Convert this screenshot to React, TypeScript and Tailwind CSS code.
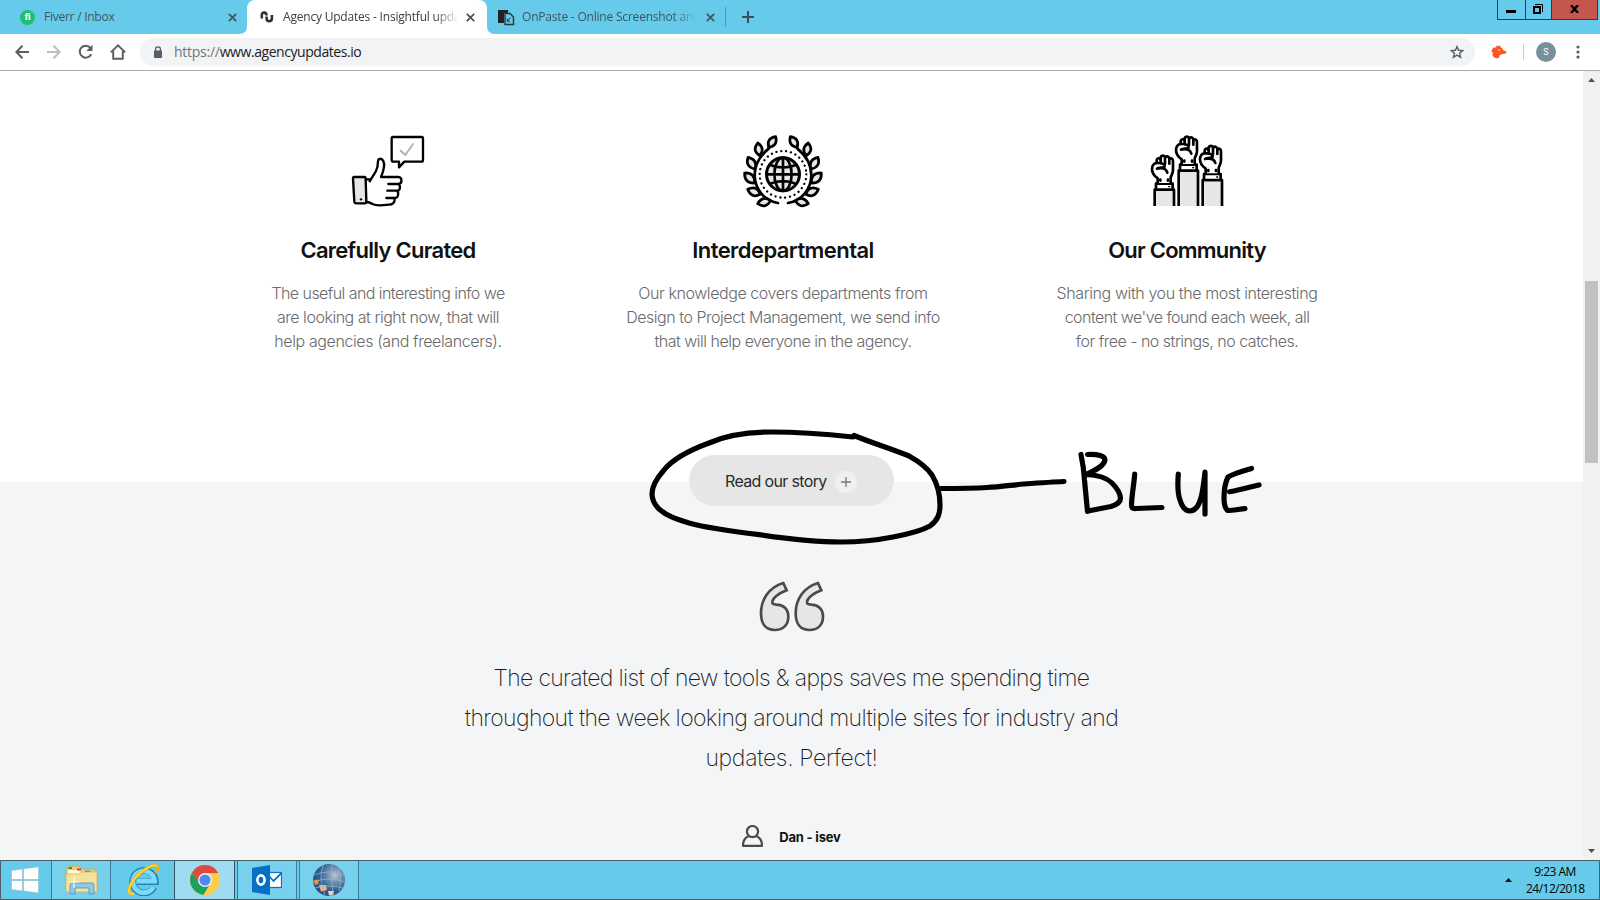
import React from "react";

const INK = "#000";
const FILL = "#e6e6e6";

function Leaf({ a, b }: { a: [number, number]; b: [number, number] }) {
  const mx = (a[0] + b[0]) / 2;
  const my = (a[1] + b[1]) / 2;
  const nx = -(b[1] - a[1]) * 0.55;
  const ny = (b[0] - a[0]) * 0.55;
  return (
    <path
      d={`M${a[0]} ${a[1]} Q${mx + nx} ${my + ny} ${b[0]} ${b[1]} Q${mx - nx} ${my - ny} ${a[0]} ${a[1]}Z`}
      fill={FILL}
    />
  );
}

function Branch() {
  return (
    <g stroke={INK} strokeWidth="8.2" strokeLinejoin="round" strokeLinecap="round" fill="none">
      <path d="M174 249 C132 242 104 206 104 166 C104 132 121 106 146 86" />
      <Leaf a={[146, 82]} b={[167, 50]} />
      <Leaf a={[119, 107]} b={[113, 69]} />
      <Leaf a={[105, 147]} b={[84, 112]} />
      <Leaf a={[104, 189]} b={[74, 159]} />
      <Leaf a={[121, 223]} b={[83, 208]} />
      <Leaf a={[152, 242]} b={[113, 251]} />
    </g>
  );
}

function WreathIcon() {
  return (
    <svg width="120" height="100" viewBox="9 0 360 300">
      <Branch />
      <g transform="translate(378 0) scale(-1 1)">
        <Branch />
      </g>
      <circle cx="189" cy="163" r="70" fill="none" stroke={INK} strokeWidth="7" strokeLinecap="round" strokeDasharray="0.1 14.56" />
      <g fill="none" stroke={INK} strokeWidth="8">
        <circle cx="189" cy="163" r="49.5" fill={FILL} strokeWidth="9" />
        <ellipse cx="189" cy="163" rx="26" ry="50" />
        <path d="M189 113V213M139 163H239M150 135Q189 150 228 135M150 191Q189 176 228 191" />
      </g>
    </svg>
  );
}

function ThumbIcon() {
  return (
    <svg width="120" height="100" viewBox="-6 0 360 300">
      <g fill="none" stroke={INK} strokeWidth="7" strokeLinejoin="round" strokeLinecap="round">
        <path d="M72 171H103Q107 171 107 176L109 244Q109 250 104 250H79Q74 250 73 245L69 176Q69 171 72 171Z" fill={FILL} />
        <path d="M108 178L120 178" />
        <path d="M119 184L137 155C144 143 144 134 144 124C144 115 155 113 160 123C165 133 164 145 153 171H205C218 171 217 192 205 192H175" />
        <path d="M206 192C213 199 210 212 202 212H172M202 213C208 221 203 234 196 234H169M194 235C195 248 188 254 176 254C158 256 142 259 127 252Q119 246 109 246" />
        <path d="M189 51H275Q279 51 279 56V119Q279 125 274 125H223L207 142V125H190Q185 125 185 120V56Q185 51 189 51Z" />
        <path d="M212 92L226 105L249 72" stroke="#b3b3b3" strokeWidth="6" />
      </g>
      <circle cx="93" cy="238" r="3.5" />
    </svg>
  );
}

function Arm({ x, y }: { x: number; y: number }) {
  return (
    <g transform={`translate(${x} ${y})`} fill="none" stroke={INK} strokeWidth="8" strokeLinejoin="round" strokeLinecap="round">
      <path d={`M146 ${262 - y}V152H204V${262 - y}`} fill={FILL} strokeLinecap="butt" />
      <rect x="150" y="134" width="50" height="18" fill="#fff" />
      <path d="M155 132V118C145 111 138 101 138 90C138 80 141 74 152 71V64C153 56 163 56 164 62V55C166 48 176 48 178 55C181 50 189 51 190 59C197 56 201 60 201 67V92C201 104 196 108 194 116V132" fill="#fff" />
      <path d="M164 57V73M177 55V75M190 59V74M152 72H163Q178 76 176 83C171 87 160 84 153 89M159 88Q180 86 184 101M163 125V122M186 125V122" />
      <path d="M188 143H191" strokeWidth="4" />
    </g>
  );
}

function FistsIcon() {
  return (
    <svg width="120" height="100" viewBox="-9 0 360 300">
      <defs>
        <clipPath id="arms">
          <rect x="0" y="0" width="360" height="258" />
        </clipPath>
      </defs>
      <g clipPath="url(#arms)">
        <Arm x={0} y={0} />
        <Arm x={-72} y={57} />
        <Arm x={72} y={28} />
      </g>
    </svg>
  );
}

function CloseX({ color }: { color: string }) {
  return (
    <svg width="9" height="9" viewBox="0 0 9 9" stroke={color} strokeWidth="1.7">
      <path d="M0.8 0.8L8.2 8.2M8.2 0.8L0.8 8.2" />
    </svg>
  );
}

function TabStrip() {
  return (
    <div className="flex h-[34px] shrink-0 bg-[#66caea] text-[12px] leading-[34px] tracking-[-0.2px] text-[#3f5660]">
      <div className="flex w-[247px] items-center pl-[20px]">
        <span className="flex size-[15px] items-center justify-center rounded-full bg-[#1dbf73] font-['Roboto'] text-[9px] font-black leading-none tracking-tight text-white">fi</span>
        <span className="ml-[9px] flex-1 tracking-[-0.25px]">Fiverr / Inbox</span>
        <span className="mr-[10px]"><CloseX color="#3f5660" /></span>
      </div>
      <div className="relative flex w-[240px] items-center rounded-t-[8px] bg-white pl-[13px] text-[#3c4043]">
        <svg className="absolute -left-[8px] bottom-0" width="8" height="8"><path d="M8 0V8H0Q8 8 8 0Z" fill="#fff" /></svg>
        <svg className="absolute -right-[8px] bottom-0" width="8" height="8"><path d="M0 0V8H8Q0 8 0 0Z" fill="#fff" /></svg>
        <svg width="14" height="14" viewBox="0 0 14 14" fill="none" stroke="#333" strokeWidth="2.6">
          <path d="M1.8 8.6V5Q1.8 2.6 4.1 2.6Q6.6 2.6 6.6 5.4M6.6 6.4V8.6Q6.6 11.2 9.1 11.2Q11.9 11.2 11.9 8.6V5" />
        </svg>
        <span className="ml-[9px] w-[176px] whitespace-nowrap [mask-image:linear-gradient(90deg,#000_152px,transparent)]">Agency Updates - Insightful upda</span>
        <span className="ml-[7px]"><CloseX color="#4a4d50" /></span>
      </div>
      <div className="flex w-[238px] items-center pl-[11px]">
        <svg width="17" height="17" viewBox="0 0 17 17">
          <path d="M0 1H10V4H6V14H0Z" fill="#222" />
          <path d="M7 4.5H12L15.5 8V15.5H7Z" fill="#66caea" stroke="#333" strokeWidth="1.4" />
          <path d="M12.5 8.5L9.5 12M9.3 9.5V12.3H12" fill="none" stroke="#333" />
        </svg>
        <span className="ml-[7px] w-[175px] whitespace-nowrap [mask-image:linear-gradient(90deg,#000_152px,transparent)]">OnPaste - Online Screenshot and</span>
        <span className="ml-[9px]"><CloseX color="#3f5660" /></span>
      </div>
      <div className="mt-[7px] h-[20px] w-px bg-[#4c98b0]" />
      <svg className="ml-[16px] mt-[11px]" width="12" height="12" stroke="#3f4d54" strokeWidth="2"><path d="M6 0V12M0 6H12" /></svg>
      <div className="ml-auto mr-[2px] flex h-[20px] border border-t-0 border-[#26404b]">
        <div className="flex w-[28px] justify-center border-r border-[#26404b] pr-px pt-[10px]"><div className="h-[3px] w-[10px] bg-black" /></div>
        <div className="flex w-[26px] justify-center border-r border-[#26404b] pr-px pt-[4px]">
          <svg width="10" height="10" fill="none" stroke="#000"><path d="M2 0.5H9.5V8" /><rect x="1" y="3" width="6" height="6" strokeWidth="2" /></svg>
        </div>
        <div className="flex w-[45px] justify-center bg-[#c4564e] pt-[5px]">
          <svg width="9" height="8" stroke="#000" strokeWidth="2.4"><path d="M1 0L8 8M8 0L1 8" /></svg>
        </div>
      </div>
    </div>
  );
}

function Toolbar() {
  return (
    <div className="flex h-[37px] shrink-0 items-center border-b border-[#a9abad] bg-white pb-px">
      <svg className="ml-[15px]" width="14" height="14" fill="none" stroke="#5a5d61" strokeWidth="2"><path d="M14 7H1.5M7.5 0.8L1.3 7L7.5 13.2" /></svg>
      <svg className="ml-[18px]" width="14" height="14" fill="none" stroke="#babcbe" strokeWidth="2"><path d="M0 7H12.5M6.5 0.8L12.7 7L6.5 13.2" /></svg>
      <svg className="ml-[17px]" width="16" height="16" fill="none" stroke="#5a5d61" strokeWidth="2"><path d="M13.2 10.2A6 6 0 1 1 12.4 3.8" /><path d="M14.5 0.8V7H8.3Z" fill="#5a5d61" stroke="none" /></svg>
      <svg className="ml-[16px]" width="16" height="16" fill="none" stroke="#5a5d61" strokeWidth="1.9"><path d="M0.8 8.4L8 1.4L15.2 8.4M3.2 7V14.8H12.8V7" /></svg>
      <div className="ml-[14px] flex h-[28px] w-[1335px] items-center rounded-full bg-[#f1f3f4] pl-[14px] pr-[11px]">
        <svg width="8" height="12" viewBox="0 0 8 12"><path d="M0 4.5H8V11Q8 12 7 12H1Q0 12 0 11Z" fill="#5a5d61" /><path d="M1.6 5V3Q1.6 0.8 4 0.8T6.4 3V5" fill="none" stroke="#5a5d61" strokeWidth="1.3" /></svg>
        <span className="ml-[12px] text-[14px] leading-[28px] tracking-[-0.44px] text-[#202124]"><span className="tracking-[-0.26px] text-[#72767a]">https://</span>www.agencyupdates.io</span>
        <svg className="ml-auto" width="14" height="14" viewBox="0 0 14 14" fill="none" stroke="#5a5d61" strokeWidth="1.4"><path d="M7 1.6L8.6 5.3L12.8 5.6L9.6 8.3L10.6 12.3L7 10.1L3.4 12.3L4.4 8.3L1.2 5.6L5.4 5.3Z" /></svg>
      </div>
      <svg className="ml-[16px]" width="16" height="14" viewBox="0 0 16 14" fill="#fd5621"><path d="M0.8 5.2L2 3L5 2.2L6 0.2L7.3 1.2L8.7 0.2L9.5 2L11.5 3.5L12 5L15.7 6.8L14.8 8.4L11.5 9L8.8 10L8 12.8L5.5 13.4L2.6 12L1.2 9.5L2.2 8L0.6 6.6Z" /><circle cx="8" cy="5" r="0.8" fill="#fff" /></svg>
      <div className="ml-[16px] h-[16px] w-px bg-[#c9cbcd]" />
      <div className="ml-[12px] flex size-[20px] items-center justify-center rounded-full bg-[#78909c] font-['Roboto'] leading-none text-white"><span className="mt-px text-[9px]">S</span></div>
      <svg className="ml-[20px]" width="4" height="14" fill="#5a5d61"><circle cx="2" cy="2" r="1.6" /><circle cx="2" cy="7" r="1.6" /><circle cx="2" cy="12" r="1.6" /></svg>
    </div>
  );
}

type Line = { text: string; tracking: string };

function Feature({ icon, title, lines, className, titleClass }: { icon: React.ReactNode; title: string; lines: Line[]; className: string; titleClass: string }) {
  return (
    <div className={`flex flex-col items-center whitespace-nowrap ${className}`}>
      {icon}
      <h2 className={`mt-[16px] text-[22px] font-semibold leading-[28px] text-[#111] ${titleClass}`}>{title}</h2>
      <p className="mt-[17px] text-center text-[16px] font-light leading-[24px] text-[#6a6a6a]">
        {lines.map((l) => (
          <span key={l.text} className={`block ${l.tracking}`}>{l.text}</span>
        ))}
      </p>
    </div>
  );
}

function Page() {
  return (
    <div className="flex w-[1583px] flex-col overflow-hidden bg-white font-['Inter',sans-serif]">
      <section className="flex h-[411px] shrink-0 pl-[203px] pt-[49px]">
        <Feature
          className="w-[370px]"
          titleClass="tracking-[-0.72px]"
          icon={<ThumbIcon />}
          title="Carefully Curated"
          lines={[
            { text: "The useful and interesting info we", tracking: "tracking-[-0.56px]" },
            { text: "are looking at right now, that will", tracking: "tracking-[-0.47px]" },
            { text: "help agencies (and freelancers).", tracking: "tracking-[-0.4px]" },
          ]}
        />
        <Feature
          className="w-[420px]"
          titleClass="tracking-[-0.57px]"
          icon={<WreathIcon />}
          title="Interdepartmental"
          lines={[
            { text: "Our knowledge covers departments from", tracking: "tracking-[-0.43px]" },
            { text: "Design to Project Management, we send info", tracking: "tracking-[-0.47px]" },
            { text: "that will help everyone in the agency.", tracking: "tracking-[-0.49px]" },
          ]}
        />
        <Feature
          className="w-[388px]"
          titleClass="tracking-[-0.78px]"
          icon={<FistsIcon />}
          title="Our Community"
          lines={[
            { text: "Sharing with you the most interesting", tracking: "tracking-[-0.4px]" },
            { text: "content we've found each week, all", tracking: "tracking-[-0.54px]" },
            { text: "for free - no strings, no catches.", tracking: "tracking-[-0.5px]" },
          ]}
        />
      </section>
      <section className="flex h-[378px] shrink-0 flex-col items-center bg-[#f3f5f7]">
        <button className="-mt-[27px] flex h-[51px] w-[205px] shrink-0 items-center rounded-full bg-[#e6e6e6] pl-[36px] text-[16px] tracking-[-0.65px] text-[#2a2a2a]">
          <span className="w-[102px] whitespace-nowrap text-left">Read our story</span>
          <span className="ml-[8px] mt-[2px] flex size-[22px] items-center justify-center rounded-full bg-[#f0f0f0]">
            <svg width="10" height="10" stroke="#777" strokeWidth="1.3"><path d="M5 0V10M0 5H10" /></svg>
          </span>
        </button>
        <svg className="mt-[75px] shrink-0" width="66" height="51" viewBox="117 33 198 153" fill={FILL} stroke="#4a4a4a" strokeWidth="8">
          <path id="mark" d="M190 39C147 52 123 88 123 130C123 162 138 180 164 180C190 180 205 164 205 140C205 117 190 104 170 104C160 103 156 102 157 95C158 84 176 70 200 61Z" />
          <use href="#mark" x="104" />
        </svg>
        <blockquote className="mt-[26px] whitespace-nowrap text-center text-[23px] font-extralight leading-[40px] text-[#1c1c1c]">
          <span className="block tracking-[-0.69px]">The curated list of new tools &amp; apps saves me spending time</span>
          <span className="block tracking-[-0.62px]">throughout the week looking around multiple sites for industry and</span>
          <span className="block tracking-[-0.32px]">updates. Perfect!</span>
        </blockquote>
        <div className="mt-[47px] flex items-center">
          <svg width="21" height="22" viewBox="0 0 21 22" fill="none" stroke="#4a4a4a" strokeWidth="2.2"><ellipse cx="10.5" cy="6.6" rx="5.6" ry="5.6" /><path d="M6.8 11C3 12.5 1 15.5 1 20.8H20C20 15.5 18 12.5 14.2 11" strokeLinejoin="round" /></svg>
          <span className="ml-[16px] mt-[3px] whitespace-nowrap text-[13px] font-bold tracking-[-0.2px] text-[#111]">Dan - isev</span>
        </div>
      </section>
    </div>
  );
}

function Annotation() {
  return (
    <svg className="pointer-events-none absolute left-[640px] top-[420px]" width="640" height="130" viewBox="640 420 640 130" fill="none" stroke="#000" strokeWidth="5.2" strokeLinecap="round" strokeLinejoin="round">
      <path d="M853 437C825 434 797 432 771 432C747 432 727 435 709 443C690 450 672 460 664 470C656 479 652 486 652 494C652 500 654 504 659 509C667 516 676 519 689 523C711 529 737 532 762 535C790 539 815 542 841 542C862 542 878 540 893 537C909 534 921 531 930 526C938 520 940 514 940 505C940 493 938 485 932 475C926 466 918 461 909 456C892 449 872 443 854 435.5" />
      <path d="M941 488.5C957 488.5 972 488.5 987 487.5C1000 487 1012 485 1024 484C1038 483 1052 482 1064 481.5" />
      <path d="M1081 454.5C1083 464 1084 471 1084.5 480L1087.5 511.5M1087.5 454.5C1098 454 1105 456 1105 460C1104 466 1096 470 1086 474.5C1099 475 1107 478 1112 483C1118 489 1120 493 1120.5 498C1120.5 503 1116 505 1111 506.5L1088 511" />
      <path d="M1134.7 474C1134 484 1132 494 1131.5 504C1131.5 508.5 1132.5 508.7 1136 508.5L1162 507.5" />
      <path d="M1178.3 474C1177.5 484 1177.5 493 1180 500C1182 507 1185 511 1190 511C1195 511 1199 506 1201.5 496C1203 489 1204 481 1205 472V514" />
      <path d="M1251.5 468.5C1243 471 1235 473 1228 477C1224.5 484 1224 491 1224 498C1224 503 1225 508 1227.5 510.5C1233 510.5 1240 509 1245 508.7M1229.5 491.7C1240 490 1249 487 1259 485" />
    </svg>
  );
}

function Scrollbar() {
  return (
    <div className="flex w-[17px] flex-col items-center bg-[#f1f1f1]">
      <svg className="mt-[7px] shrink-0" width="7" height="4"><path d="M0 4L3.5 0L7 4Z" fill="#505050" /></svg>
      <div className="mt-[199px] h-[182px] w-[13px] shrink-0 bg-[#c1c1c1]" />
      <svg className="mb-[7px] mt-auto shrink-0" width="7" height="4"><path d="M0 0L3.5 4L7 0Z" fill="#505050" /></svg>
    </div>
  );
}

function Taskbar() {
  return (
    <div className="flex h-[40px] shrink-0 border border-[#4e5d64] bg-[#66caea]">
      <div className="flex w-[51px] items-center justify-center border-r border-[#40799a] pr-[2px]">
        <svg width="28" height="28" viewBox="0 0 28 28" fill="#fff" stroke="#8cbccb" strokeWidth="0.6"><path d="M0.5 4.5L11.5 3V13.5H0.5ZM12.5 2.8L27.5 0.8V13.5H12.5ZM0.5 14.5H11.5V25L0.5 23.5ZM12.5 14.5H27.5V27L12.5 25Z" /></svg>
      </div>
      <div className="flex w-[59px] items-center justify-center border-r border-[#40799a] bg-[#77d0ec]">
        <svg width="33" height="30" viewBox="0 0 33 30">
          <path d="M1 3H3L4 1H14L16 4H29L32 6V26H1Z" fill="#e8cd75" stroke="#c6a84e" strokeWidth="0.7" />
          <path d="M3 5H14L16 7H30V10H3Z" fill="#fff6d6" />
          <path d="M3.5 2H7V4H3.5Z" fill="#12a33b" /><path d="M12 3.5H16V5.5H12Z" fill="#d6452c" /><path d="M20 5.5H25V7.5H20Z" fill="#2b9fe0" />
          <path d="M1 9H14L16 7H32V27H1Z" fill="#f6e19a" stroke="#cdb160" strokeWidth="0.7" />
          <path d="M5 29V20Q5 18 7 18H27Q29 18 29 20V29H24V23H10V29Z" fill="#8fc9e8" stroke="#4f93bb" strokeWidth="0.8" />
          <path d="M9 11V23M4 17H14" stroke="#fff" strokeWidth="1" />
        </svg>
      </div>
      <div className="flex w-[64px] items-center justify-center border-r border-[#2f5563]">
        <svg width="32" height="32" viewBox="0 0 32 32" fill="none">
          <path d="M27 23A11.3 11.3 0 1 1 28.3 17.5H10" stroke="#2084bd" strokeWidth="6.8" />
          <path d="M26.3 22.8A10.8 10.8 0 1 1 27.5 17H10" stroke="#7fd9f8" strokeWidth="4.8" />
          <path d="M7 29.5C-1 32 1 22 9 13C17 4 28 -1 30 2.5C31 4 30 7 28.5 9" stroke="#e9b312" strokeWidth="3" />
          <path d="M7 29.5C-1 32 1 22 9 13C17 4 28 -1 30 2.5" stroke="#ffdf45" strokeWidth="1.4" />
        </svg>
      </div>
      <div className="flex w-[60px] items-center justify-center border-r border-[#2f5563] bg-[#9fdcf2]">
        <svg width="30" height="30" viewBox="0 0 30 30">
          <circle cx="15" cy="15" r="15" fill="#fbcd4d" />
          <path d="M2 7.5A15 15 0 0 1 28 7.5L28.3 8.2H15L8.5 18.5Z" fill="#dc4b3e" />
          <path d="M2 7.5A15 15 0 0 0 13.5 29.9L20.5 18.5L15 15L8.8 18.2Z" fill="#1aa160" />
          <path d="M15 8.2H28.3A15 15 0 0 1 13.5 29.9L20.8 18.5Z" fill="#fbcd4d" />
          <circle cx="15" cy="15" r="7" fill="#f1f1f1" /><circle cx="15" cy="15" r="5.6" fill="#4a8af4" />
        </svg>
      </div>
      <div className="ml-[2px] flex w-[60px] items-center justify-center border-x border-[#40799a] bg-[#77d0ec]">
        <svg width="30" height="30" viewBox="0 0 30 30">
          <rect x="15" y="7.5" width="14.5" height="15" fill="#fff" stroke="#0b72c5" strokeWidth="1.2" />
          <path d="M16 10L21.5 16L29 8.5" fill="none" stroke="#0b72c5" strokeWidth="1.8" />
          <path d="M0 3L18 0V30L0 27Z" fill="#0570c4" />
          <ellipse cx="9" cy="15" rx="3.6" ry="4.6" fill="none" stroke="#fff" strokeWidth="2.6" />
        </svg>
      </div>
      <div className="ml-[2px] flex w-[60px] items-center justify-center border-x border-[#40799a] bg-[#77d0ec] pr-px">
        <svg width="32" height="32" viewBox="0 0 32 32">
          <defs><radialGradient id="world" cx="0.68" cy="0.35" r="0.75"><stop offset="0" stopColor="#b9c9d6" /><stop offset="0.3" stopColor="#6f90af" /><stop offset="0.65" stopColor="#2f5f92" /><stop offset="1" stopColor="#244b7c" /></radialGradient></defs>
          <circle cx="16" cy="16" r="16" fill="url(#world)" />
          <path d="M0.6 16L5.5 15.5V20L2 21Z" fill="#f58a2c" /><path d="M6 21L13 21L14 26L8 27.5Z" fill="#f9b174" /><path d="M15 27L21 27L20 31.5H16Z" fill="#fbd0ad" />
          <path d="M1 11Q16 5 31 11M0 18Q16 12 32 18M2 24Q16 20 30 24M10 1Q5 16 12 31M19 0Q18 16 20 31M26 4Q29 14 26 27" fill="none" stroke="#9db6cd" strokeWidth="0.7" />
        </svg>
      </div>
      <svg className="ml-auto mr-[14px] mt-[17px]" width="7" height="4"><path d="M0 4L3.5 0L7 4Z" fill="#111" /></svg>
      <div className="mr-[15px] w-[58px] whitespace-nowrap pt-[2px] text-center text-[12px] leading-[17px] tracking-[-0.5px] text-black">
        <div>9:23 AM</div>
        <div>24/12/2018</div>
      </div>
    </div>
  );
}

export default function App() {
  return (
    <div className="relative flex h-[900px] w-[1600px] flex-col overflow-hidden font-['Open_Sans','Noto_Sans',sans-serif]">
      <TabStrip />
      <Toolbar />
      <div className="flex h-[789px] shrink-0">
        <Page />
        <Scrollbar />
      </div>
      <Taskbar />
      <Annotation />
    </div>
  );
}
